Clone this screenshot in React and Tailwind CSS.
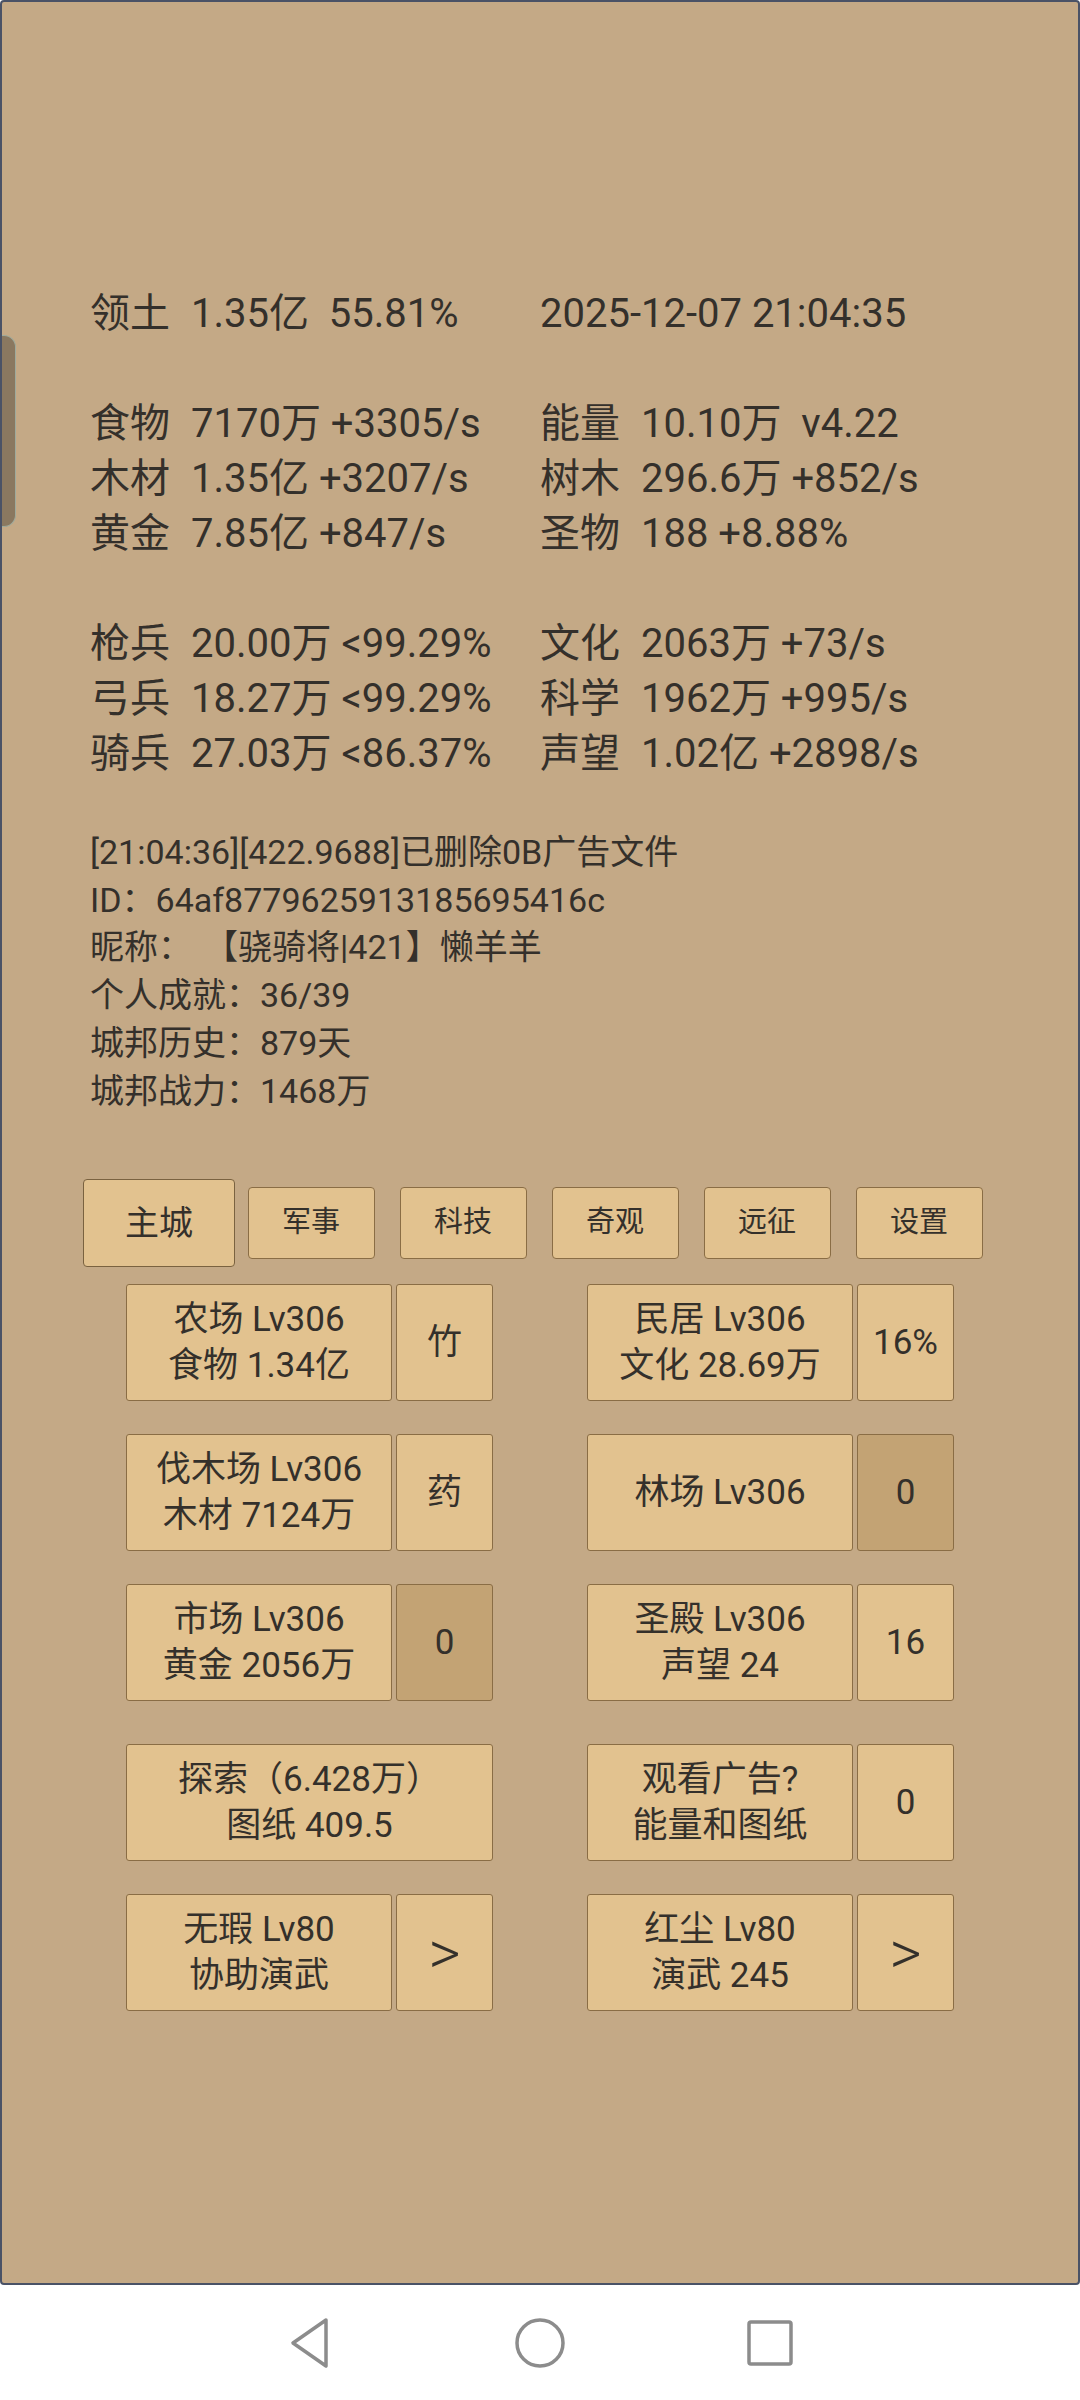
const font = { fontFamily: 'Roboto, "Noto Sans CJK SC", sans-serif' };

const stats = [
  [['领土', '1.35亿  55.81%'], [null, '2025-12-07 21:04:35']],
  null,
  [['食物', '7170万 +3305/s'], ['能量', '10.10万  v4.22']],
  [['木材', '1.35亿 +3207/s'], ['树木', '296.6万 +852/s']],
  [['黄金', '7.85亿 +847/s'], ['圣物', '188 +8.88%']],
  null,
  [['枪兵', '20.00万 <99.29%'], ['文化', '2063万 +73/s']],
  [['弓兵', '18.27万 <99.29%'], ['科学', '1962万 +995/s']],
  [['骑兵', '27.03万 <86.37%'], ['声望', '1.02亿 +2898/s']],
];

const logs = [
  '[21:04:36][422.9688]已删除0B广告文件',
  'ID：64af8779625913185695416c',
  ['昵称：', '【骁骑将|421】懒羊羊'],
  '个人成就：36/39',
  '城邦历史：879天',
  '城邦战力：1468万',
];

const tabs = ['主城', '军事', '科技', '奇观', '远征', '设置'];

function Cell({ cell }) {
  const [label, value] = cell;
  return (
    <div className="flex w-[450px] whitespace-pre">
      {label && <span className="w-[101px]">{label}</span>}
      <span>{value}</span>
    </div>
  );
}

function Box({ lines, w, dark, big }) {
  return (
    <div
      className={`flex h-[117px] flex-col items-center justify-center rounded-[3px] border border-[#8a6d45] text-[35px] leading-[46px] ${
        dark ? 'bg-[#c3a374]' : 'bg-[#e2c28f]'
      } ${w}`}
    >
      {lines.map((l, i) => (
        <span key={i} className={big ? 'text-[62px] font-light leading-[62px]' : ''}>
          {l}
        </span>
      ))}
    </div>
  );
}

function Pair({ left, right, rightDark, rightBig, leftFull }) {
  return (
    <div className="flex w-[367px] gap-[4px]">
      {leftFull ? (
        <Box lines={left} w="w-[367px]" />
      ) : (
        <>
          <Box lines={left} w="w-[266px]" />
          <Box lines={right} w="w-[97px]" dark={rightDark} big={rightBig} />
        </>
      )}
    </div>
  );
}

function Row({ children, mt }) {
  return <div className={`flex justify-center gap-[94px] ${mt}`}>{children}</div>;
}

export default function App() {
  return (
    <div className="flex h-[2400px] w-[1080px] flex-col bg-white text-[#34302b]" style={font}>
      <div className="relative h-[2285px] rounded-[4px] border-2 border-[#4a5266] bg-[#c4a986]">
        <div className="absolute left-0 top-[333px] h-[192px] w-[14px] rounded-r-[12px] border border-l-0 border-[#9eaa9c] bg-[#8a7860]" />

        <div className="pl-[88px] pt-[284px] text-[40px] leading-[55px]">
          {stats.map((row, i) =>
            row ? (
              <div key={i} className="flex">
                <Cell cell={row[0]} />
                <Cell cell={row[1]} />
              </div>
            ) : (
              <div key={i} className="h-[55px]" />
            )
          )}
        </div>

        <div className="mt-[48px] pl-[88px] text-[34px] leading-[47.7px]">
          {logs.map((l, i) =>
            Array.isArray(l) ? (
              <div key={i} className="flex">
                <span>{l[0]}</span>
                <span className="ml-[12px]">{l[1]}</span>
              </div>
            ) : (
              <div key={i}>{l}</div>
            )
          )}
        </div>

        <div className="mt-[64px] flex h-[88px] pl-[81px]">
          {tabs.map((t, i) => (
            <div key={t} className="flex w-[152px] items-center justify-center">
              {i === 0 ? (
                <div className="flex h-[88px] w-[153px] items-center justify-center rounded-[4px] border border-[#7a6240] bg-[#e2c28f] text-[34px]">
                  {t}
                </div>
              ) : (
                <div className="flex h-[72px] w-[127px] items-center justify-center rounded-[4px] border border-[#8a6d45] bg-[#e2c28f] text-[29px]">
                  {t}
                </div>
              )}
            </div>
          ))}
        </div>

        <Row mt="mt-[17px]">
          <Pair left={['农场 Lv306', '食物 1.34亿']} right={['竹']} />
          <Pair left={['民居 Lv306', '文化 28.69万']} right={['16%']} />
        </Row>
        <Row mt="mt-[33px]">
          <Pair left={['伐木场 Lv306', '木材 7124万']} right={['药']} />
          <Pair left={['林场 Lv306']} right={['0']} rightDark />
        </Row>
        <Row mt="mt-[33px]">
          <Pair left={['市场 Lv306', '黄金 2056万']} right={['0']} rightDark />
          <Pair left={['圣殿 Lv306', '声望 24']} right={['16']} />
        </Row>
        <Row mt="mt-[43px]">
          <Pair left={['探索（6.428万）', '图纸 409.5']} leftFull />
          <Pair left={['观看广告?', '能量和图纸']} right={['0']} />
        </Row>
        <Row mt="mt-[33px]">
          <Pair left={['无瑕 Lv80', '协助演武']} right={['>']} rightBig />
          <Pair left={['红尘 Lv80', '演武 245']} right={['>']} rightBig />
        </Row>
      </div>

      <div className="flex h-[115px] items-center justify-center gap-[180px]">
        <svg width="48" height="52" viewBox="0 0 48 52">
          <path d="M40 3 L7 26 L40 49 Z" fill="none" stroke="#8c8c8c" strokeWidth="3.5" strokeLinejoin="round" />
        </svg>
        <svg width="52" height="52" viewBox="0 0 52 52">
          <circle cx="26" cy="26" r="23" fill="none" stroke="#8c8c8c" strokeWidth="3.5" />
        </svg>
        <svg width="48" height="48" viewBox="0 0 48 48">
          <rect x="3" y="3" width="42" height="42" rx="2" fill="none" stroke="#8c8c8c" strokeWidth="3.5" />
        </svg>
      </div>
    </div>
  );
}
